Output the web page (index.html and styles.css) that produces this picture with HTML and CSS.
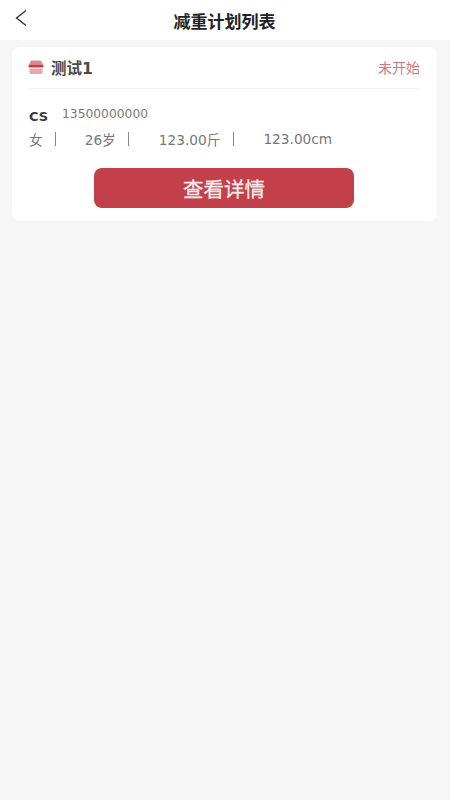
FILE: index.html
```html
<!DOCTYPE html>
<html lang="zh-CN">
<head>
    <meta charset="UTF-8">
    <meta name="viewport" content="width=device-width, initial-scale=1.0">
    <title>减重计划列表</title>
    <link rel="stylesheet" href="styles.css">
</head>
<body>

    <div class="header">
        <svg class="back" width="14" height="18" viewBox="0 0 14 18">
            <path d="M12 1.5 L2.5 9 L12 16.5" fill="none" stroke="#333" stroke-width="1.4"/>
        </svg>
        <h1>减重计划列表</h1>
    </div>

    <div class="list">
        <div class="card">
            <div class="card-top">
                <div class="plan-name">
                    <svg class="shop" width="16" height="14" viewBox="0 0 16 14">
                        <path d="M3 0.5 H13 L15 4.5 H1 Z" fill="#d98a8e"/>
                        <rect x="0.5" y="4.5" width="15" height="3" rx="1.2" fill="#c0414a"/>
                        <path d="M1.5 8.5 H14.5 V12.5 Q14.5 14 13 14 H3 Q1.5 14 1.5 12.5 Z" fill="#eba7ab"/>
                    </svg>
                    <span>测试1</span>
                </div>
                <span class="status">未开始</span>
            </div>
            <div class="person">
                <span class="person-name">CS</span>
                <span class="phone">13500000000</span>
            </div>
            <div class="stats">
                <span class="stat-sex">女</span><span class="sep"></span>
                <span class="stat-age">26岁</span><span class="sep"></span>
                <span class="stat-weight">123.00斤</span><span class="sep"></span>
                <span class="stat-height">123.00cm</span>
            </div>
            <button class="detail-btn">查看详情</button>
        </div>
    </div>

</body>
</html>
```

FILE: styles.css
```css
body {
    margin: 0;
    height: 800px;
    overflow: hidden;
    background: #f6f6f6;
    font-family: "DejaVu Sans", "Noto Sans CJK SC", sans-serif;
}

.header {
    height: 40px;
    background: #fff;
    display: flex;
    align-items: center;
    justify-content: center;
    position: relative;
}

.header h1 {
    margin: 0 1px 0 0;
    font-size: 17px;
    font-weight: bold;
    color: #222;
}

.back {
    position: absolute;
    left: 14px;
    top: 9px;
}

.list {
    padding: 7px 13px 0 12px;
}

.card {
    background: #fff;
    border-radius: 8px;
    padding: 0 17px 13px 16px;
    height: 174px;
    box-sizing: border-box;
}

.card-top {
    height: 42px;
    padding-bottom: 2px;
    display: flex;
    align-items: center;
    justify-content: space-between;
    border-bottom: 1px solid #f3f3f3;
    box-sizing: border-box;
}

.plan-name {
    display: flex;
    align-items: center;
    gap: 7px;
    font-size: 15.5px;
    font-weight: bold;
    color: #4a4a4a;
}

.status {
    font-size: 14px;
    color: #d0777c;
}

.person {
    display: flex;
    align-items: flex-start;
    margin: 18px 0 0 1px;
    height: 20px;
}

.person-name {
    font-size: 13px;
    font-weight: bold;
    color: #3a3a3a;
    text-transform: uppercase;
    margin-top: 2px;
    width: 33px;
}

.phone {
    font-size: 12.3px;
    color: #777;
}

.stats {
    display: flex;
    align-items: center;
    font-size: 13.7px;
    color: #777;
    height: 24px;
    margin-left: 1px;
}

.sep {
    width: 1px;
    height: 14px;
    margin-left: 12.5px;
    background: #888;
}

.stat-age {
    margin-left: 28.5px;
}

.stat-weight {
    margin-left: 29.5px;
}

.stat-height {
    margin-left: 29.5px;
}

.detail-btn {
    display: block;
    width: 260px;
    height: 40px;
    margin: 17px 0 0 66px;
    border: none;
    border-radius: 8px;
    background: #c3404a;
    color: #f6eaea;
    font-family: inherit;
    font-size: 20.5px;
    font-weight: normal;
    -webkit-text-stroke: 0.3px #f6eaea;
}
```
